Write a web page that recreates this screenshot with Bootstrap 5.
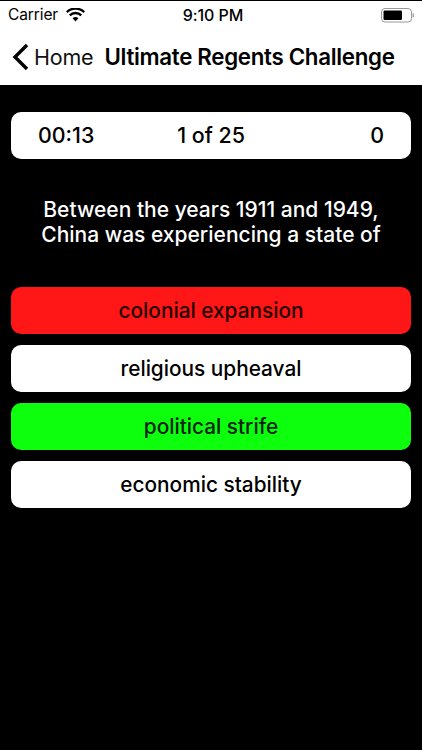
<!DOCTYPE html>
<html lang="en">
<head>
<meta charset="utf-8">
<title>Ultimate Regents Challenge</title>
<link href="https://cdn.jsdelivr.net/npm/bootstrap@5.3.0/dist/css/bootstrap.min.css" rel="stylesheet">
<style>
html,body{height:100%;background:#000;font-family:Inter,"Liberation Sans",sans-serif;overflow:hidden}
.app-head{background:#fff;color:#000;margin-top:1px;height:84px}
.status-row{height:28px;padding:0 8px;font-size:15.5px;line-height:28px;letter-spacing:-.1px}
.status-time{position:absolute;left:4px;right:0;text-align:center;font-weight:500;font-size:16px}
.status-wrap{position:relative}
.nav-row{height:56px;padding-left:12px}
.nav-home{font-size:21.5px;margin-left:5px;font-weight:400;letter-spacing:-.2px;color:#111}
.nav-title{font-size:22.3px;font-weight:600;margin-left:11px;letter-spacing:-.3px;white-space:nowrap}
.stage{padding:27px 11px 0}
.score-bar{height:47px;background:#fff;border-radius:10px;font-size:21.4px;font-weight:500;padding:0 27px;color:#000}
.score-mid{position:absolute;left:0;right:0;text-align:center}
.question{color:#fff;font-size:21px;font-weight:500;line-height:25px;text-align:center;margin:38px 0 40px}
.answer{display:block;width:100%;height:47px;border:0;border-radius:10px;background:#fff;color:#000;font-size:20.8px;font-weight:500;padding:1px 0 0;line-height:46px}
.answer.wrong{background:#ff1616;color:#200}
.answer.right{background:#0dff0d;color:#021}
.answers{gap:11px}
</style>
</head>
<body>
<header class="app-head">
  <div class="status-wrap">
    <div class="status-row d-flex align-items-center">
      <span>Carrier</span>
      <svg class="ms-2" width="19" height="14" viewBox="0 0 19 14" aria-hidden="true"><path d="M9.5 13.5 6.6 10.3a4.2 4.2 0 0 1 5.8 0zM4.6 8.2 2.9 6.4a9.6 9.6 0 0 1 13.2 0l-1.7 1.8a7.1 7.1 0 0 0-9.8 0zM1.6 5 0 3.2a13.8 13.800 0 0 1 19 0L17.400 5a11.500 11.500 0 0 0-15.800 0z" fill="#000"/></svg>
      <span class="status-time">9:10 PM</span>
      <svg class="ms-auto batt" width="33" height="15" viewBox="0 0 33 15" aria-hidden="true"><rect x=".5" y=".5" width="30" height="13.500" rx="3.500" fill="none" stroke="#999"/><rect x="2.500" y="2.500" width="18.500" height="9.500" rx="1.200" fill="#000"/><rect x="31.500" y="5" width="1.500" height="4.500" rx=".7" fill="#aaa"/></svg>
    </div>
  </div>
  <div class="nav-row d-flex align-items-center">
    <svg width="17" height="28" viewBox="0 0 17 28" aria-hidden="true"><path d="M15 2 3 14l12 12" fill="none" stroke="#000" stroke-width="3.400"/></svg>
    <span class="nav-home">Home</span>
    <span class="nav-title">Ultimate Regents Challenge</span>
  </div>
</header>
<main class="stage">
  <div class="score-bar d-flex justify-content-between align-items-center position-relative">
    <span>00:13</span>
    <span class="score-mid">1 of 25</span>
    <span>0</span>
  </div>
  <p class="question">Between the years 1911 and 1949,<br>China was experiencing a state of</p>
  <div class="answers d-flex flex-column">
    <button type="button" class="btn answer wrong">colonial expansion</button>
    <button type="button" class="btn answer">religious upheaval</button>
    <button type="button" class="btn answer right">political strife</button>
    <button type="button" class="btn answer">economic stability</button>
  </div>
</main>
<script src="https://cdn.jsdelivr.net/npm/bootstrap@5.3.0/dist/js/bootstrap.bundle.min.js"></script>
</body>
</html>
